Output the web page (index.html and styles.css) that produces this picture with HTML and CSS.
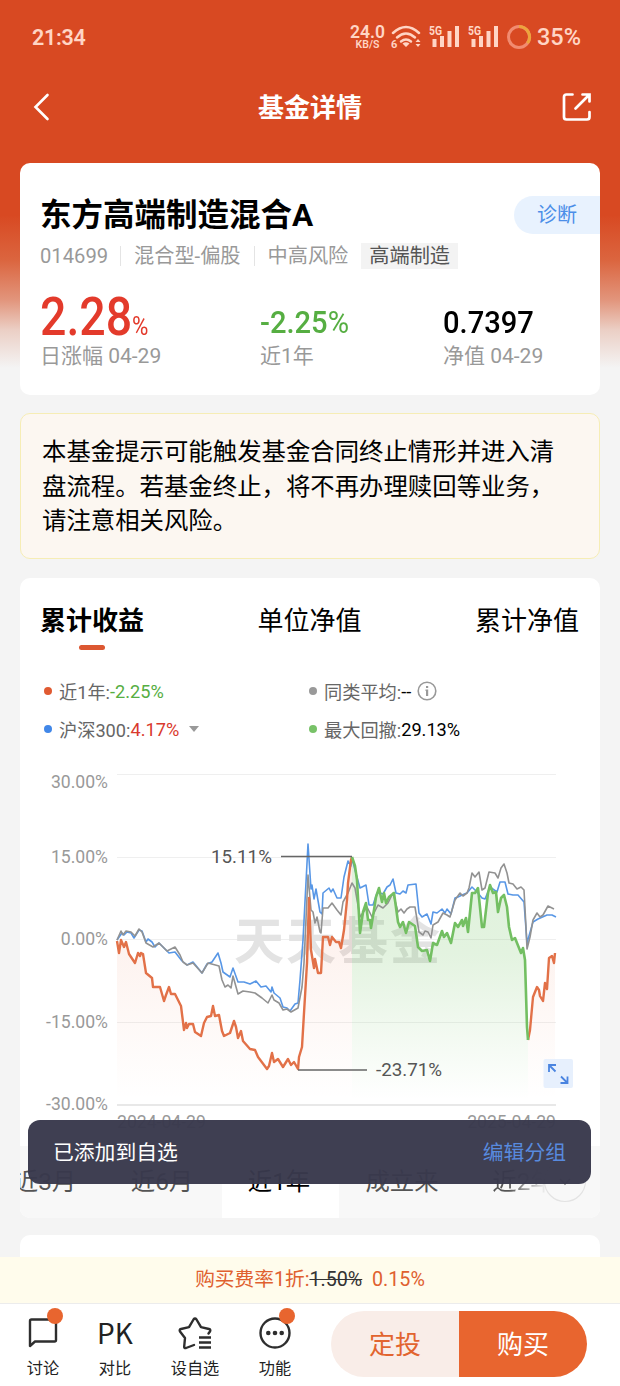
FILE: index.html
```html
<!DOCTYPE html>
<html lang="zh-CN">
<head>
    <meta charset="UTF-8">
    <meta name="viewport" content="width=device-width, initial-scale=1.0">
    <title>基金详情</title>
    <link rel="stylesheet" href="styles.css">
</head>
<body>
<div class="app">
    <div class="page">
        <!-- Status bar -->
        <div class="status-bar">
            <span class="time">21:34</span>
            <div class="status-icons">
                <div class="speed"><b>24.0</b><span>KB/S</span></div>
                <svg class="wifi" width="31" height="24" viewBox="0 0 31 24">
                    <g fill="none" stroke="#ffd5c5" stroke-width="2.5" stroke-linecap="round">
                        <path d="M2 8Q15 -4 28 8"/>
                        <path d="M6 12.500Q15 4.500 24 12.500"/>
                        <path d="M10 16.500Q15 12.500 20 16.500"/>
                    </g>
                    <path d="M11.500 18.500Q15 16 18.500 18.500L15 22ZM24.500 17L27 14L29.500 17ZM24.500 19L27 22L29.500 19Z" fill="#ffd5c5"/>
                    <text x="0" y="23" class="wifi-num">6</text>
                </svg>
                <svg width="31" height="24" viewBox="0 0 31 24">
                    <text x="0" y="9.500" class="net" textLength="13" lengthAdjust="spacingAndGlyphs">5G</text>
                    <path d="M3.500 14h4v8h-4zM11 11h4v11h-4zM18.500 6h4v16h-4zM26 1h4v21h-4z" fill="#ffd5c5"/>
                </svg>
                <svg width="31" height="24" viewBox="0 0 31 24">
                    <text x="0" y="9.500" class="net" textLength="13" lengthAdjust="spacingAndGlyphs">5G</text>
                    <path d="M3.500 14h4v8h-4zM11 11h4v11h-4zM18.500 6h4v16h-4zM26 1h4v21h-4z" fill="#ffd5c5"/>
                </svg>
                <svg class="ring" width="26" height="26" viewBox="0 0 26 26" fill="none" stroke-width="3">
                    <circle cx="13" cy="13" r="10.500" stroke="#f18b70"/>
                    <path d="M13 2.500A10.500 10.500 0 0 1 21.500 19.200" stroke="#eda43d"/>
                </svg>
                <span class="battery">35%</span>
            </div>
        </div>

        <!-- Nav bar -->
        <div class="nav-bar">
            <svg width="20" height="30" viewBox="0 0 20 30"><path d="M15.500 3L3.500 15L15.500 27" fill="none" stroke="#fff" stroke-width="2.600" stroke-linecap="round"/></svg>
            <h1>基金详情</h1>
            <svg width="30" height="30" viewBox="0 0 30 30" fill="none" stroke="#fff" stroke-width="2.700" stroke-linecap="round">
                <path d="M10.500 2.500H4.500Q2 2.500 2 5V25Q2 27.500 4.500 27.500H25Q27.500 27.500 27.500 25V20"/>
                <path d="M13.500 16.500L27 3M20.500 2.500H27.500V9.500"/>
            </svg>
        </div>

        <!-- Fund summary -->
        <div class="card summary">
            <div class="title-row">
                <h2>东方高端制造混合A</h2>
                <span class="diagnose">诊断</span>
            </div>
            <div class="tags">
                <span class="code">014699</span>
                <span class="sep">混合型-偏股</span>
                <span class="sep">中高风险</span>
                <span class="tag">高端制造</span>
            </div>
            <div class="stats">
                <div>
                    <div class="value big"><span>2.28<small>%</small></span></div>
                    <div class="label">日涨幅 04-29</div>
                </div>
                <div>
                    <div class="value green"><span>-2.25<i>%</i></span></div>
                    <div class="label">近1年</div>
                </div>
                <div>
                    <div class="value"><span>0.7397</span></div>
                    <div class="label">净值 04-29</div>
                </div>
            </div>
        </div>

        <div class="notice">本基金提示可能触发基金合同终止情形并进入清盘流程。若基金终止，将不再办理赎回等业务，请注意相关风险。</div>

        <!-- Performance chart -->
        <div class="card performance">
            <div class="tabs">
                <span class="active">累计收益</span>
                <span>单位净值</span>
                <span>累计净值</span>
            </div>
            <div class="legend">
                <div><i class="dot orange"></i>近1年:<em class="down">-2.25%</em></div>
                <div><i class="dot grey"></i>同类平均:<em>--</em>
                    <svg class="info" width="20" height="20" viewBox="0 0 20 20"><circle cx="10" cy="10" r="8.800" fill="none" stroke="#999" stroke-width="1.600"/><path d="M9 5h2.200v2H9zM8.500 8.500h2.700v6.500H9V10H8.500z" fill="#999"/></svg>
                </div>
                <div><i class="dot blue"></i>沪深300:<em class="up">4.17%</em><b class="caret"></b></div>
                <div><i class="dot lime"></i>最大回撤:<em>29.13%</em></div>
            </div>
            <svg class="chart" width="580" height="386" viewBox="20 760 580 386">
                <defs>
                    <linearGradient id="orangeFill" gradientUnits="userSpaceOnUse" x1="0" y1="857" x2="0" y2="1100">
                        <stop offset="0" stop-color="#e8683a" stop-opacity=".13"/>
                        <stop offset="1" stop-color="#e8683a" stop-opacity="0"/>
                    </linearGradient>
                    <linearGradient id="greenFill" gradientUnits="userSpaceOnUse" x1="0" y1="857" x2="0" y2="1100">
                        <stop offset="0" stop-color="#6dc05c" stop-opacity=".22"/>
                        <stop offset=".4" stop-color="#6dc05c" stop-opacity=".19"/>
                        <stop offset="1" stop-color="#6dc05c" stop-opacity="0"/>
                    </linearGradient>
                </defs>
                <path class="grid" d="M117 774.500H556M117 857.500H556M117 939.500H556M117 1022.500H556"/>
                <path class="axis" d="M117 1105H556"/>
                <text class="watermark" x="234" y="959" textLength="206">天天基金</text>
                <g id="fills"></g>
                <g id="lines"></g>
                <path class="marker" d="M281 856.500H352M298 1070H367"/>
                <g class="y-axis">
                    <text x="108" y="787.500">30.00%</text>
                    <text x="108" y="862.500">15.00%</text>
                    <text x="108" y="945">0.00%</text>
                    <text x="108" y="1027.500">-15.00%</text>
                    <text x="108" y="1110">-30.00%</text>
                </g>
                <g class="callout">
                    <text x="211" y="862.500">15.11%</text>
                    <text x="376" y="1076">-23.71%</text>
                </g>
                <g class="x-axis">
                    <text x="117" y="1128">2024-04-29</text>
                    <text x="556" y="1128" text-anchor="end">2025-04-29</text>
                </g>
                <rect x="543.500" y="1059" width="29.500" height="29" rx="2" fill="#e7f0fd"/>
                <path d="M549 1072V1065H556M549.500 1065.500L555.500 1071.500M567.500 1076.500V1083H560.500M567 1082.500L561 1076.500" fill="none" stroke="#4a84e0" stroke-width="1.800"/>
            </svg>
            <div class="ranges">
                <span>近3月</span>
                <span>近6月</span>
                <span class="active">近1年</span>
                <span class="since">成立来</span>
                <span class="fade">近2年</span>
                <svg class="more" width="44" height="44" viewBox="0 0 44 44"><circle cx="22" cy="22" r="20.500" fill="#f8f8f8" stroke="#e3e3e3" stroke-width="1.200"/><path d="M17 20L22 25L27 20" fill="none" stroke="#888" stroke-width="1.600"/></svg>
            </div>
        </div>
        <div class="card next-card"></div>
    </div>

    <div class="fee">购买费率1折:<del>1.50%</del>&nbsp;&nbsp;0.15%</div>

    <!-- Bottom toolbar -->
    <div class="toolbar">
        <div class="tool">
            <svg width="36" height="36" viewBox="0 0 36 36"><path d="M5 31V6Q5 4.500 6.500 4.500H29.500Q31 4.500 31 6V25Q31 26.500 29.500 26.500H10Z" fill="none" stroke="#2e2e2e" stroke-width="2.400" stroke-linejoin="round"/></svg>
            <span>讨论</span><i class="badge"></i>
        </div>
        <div class="tool"><strong>PK</strong><span>对比</span></div>
        <div class="tool">
            <svg width="36" height="36" viewBox="0 0 36 36" fill="none" stroke="#2e2e2e" stroke-width="2.400" stroke-linejoin="round" stroke-linecap="round"><path d="M17 30L9 33Q7 33.500 7.200 31.500L8 23L3 16.500Q2 14.500 4 14L12 12.200L16.500 4.500Q18 2.500 19.500 4.500L24 12.200L32 14Q34 14.500 33 16.500L31.500 18.500"/><path d="M22 22.500H34M22 27.500H34M22 32.500H34" stroke-linecap="butt"/></svg>
            <span>设自选</span>
        </div>
        <div class="tool">
            <svg width="36" height="36" viewBox="0 0 36 36"><circle cx="18" cy="18" r="14.500" fill="none" stroke="#2e2e2e" stroke-width="2.400"/><g fill="#2e2e2e"><circle cx="11.300" cy="18" r="2.300"/><circle cx="18" cy="18" r="2.300"/><circle cx="24.700" cy="18" r="2.300"/></g></svg>
            <span>功能</span><i class="badge"></i>
        </div>
        <div class="buttons">
            <button class="plan">定投</button>
            <button class="buy">购买</button>
        </div>
    </div>

    <div class="toast"><span>已添加到自选</span><a>编辑分组</a></div>
</div>
<script src="chart.js"></script>
</body>
</html>
```
FILE: styles.css
```css
* {
    box-sizing: border-box;
}

body {
    margin: 0;
    background-color: #f4f4f4;
    font-family: Roboto, "Noto Sans CJK SC", sans-serif;
    font-weight: 400;
    color: #000;
}

i, em {
    font-style: normal;
}

h1, h2 {
    margin: 0;
}

.app {
    position: relative;
    display: flex;
    flex-direction: column;
    width: 620px;
    height: 1386px;
    overflow: hidden;
}

.page {
    flex: 1;
    min-height: 0;
    overflow: hidden;
    padding: 0 20px;
    background: linear-gradient(#d84922 0, #d84922 215px, #db653f 260px, #e2957c 300px, #ebcfc5 330px, #f4f4f4 368px);
}

/* Status bar */
.status-bar {
    display: flex;
    justify-content: space-between;
    align-items: center;
    height: 74px;
    padding: 0 19px 0 12px;
    color: #ffd5c5;
}

.time {
    font-size: 21.5px;
    font-weight: 600;
    letter-spacing: -0.3px;
}

.status-icons {
    display: flex;
    align-items: center;
    gap: 7.5px;
}

.speed {
    display: flex;
    flex-direction: column;
    align-items: center;
    font-size: 10.5px;
    line-height: 11px;
    font-weight: 600;
    width: 36px;
    margin-right: -2px;
}

.speed b {
    font-size: 17.5px;
    line-height: 14px;
    font-weight: 600;
}

.wifi-num {
    font-size: 11px;
    font-weight: 700;
    fill: #ffd5c5;
}

.net {
    font-size: 12px;
    font-weight: 700;
    fill: #ffd5c5;
}

.battery {
    font-size: 23.5px;
    font-weight: 500;
    margin-left: -3px;
}

/* Nav bar */
.nav-bar {
    display: flex;
    justify-content: space-between;
    align-items: center;
    height: 66px;
    padding: 0 8px 0 12px;
    color: #fff;
    margin-bottom: 23px;
}

.nav-bar h1 {
    padding: 2px 0 0 6px;
    font-size: 26px;
    line-height: 30px;
    font-weight: 700;
}

.card {
    background-color: #fff;
    border-radius: 10px;
}

/* Fund summary */
.summary {
    height: 232px;
    padding: 33px 0 0 20px;
}

.title-row {
    display: flex;
    justify-content: space-between;
    align-items: center;
    height: 38px;
}

.title-row h2 {
    padding-top: 2px;
    font-size: 31.500px;
    line-height: 38px;
    font-weight: 700;
}

.diagnose {
    width: 86px;
    height: 38px;
    border-radius: 19px 0 0 19px;
    background-color: #e8f2fe;
    color: #4b8ee8;
    font-size: 20px;
    line-height: 39px;
    text-align: center;
}

.tags {
    display: flex;
    align-items: center;
    height: 28px;
    margin-top: 8px;
    color: #999;
    font-size: 20.2px;
    line-height: 26px;
}

.code {
    width: 80px;
}

.sep {
    border-left: 1px solid #e4e4e4;
    line-height: 20px;
    padding: 0 13px;
}

.tag {
    background-color: #f3f3f3;
    color: #555;
    padding: 0 8px;
}

.stats {
    display: grid;
    grid-template-columns: 220px 183px auto;
    margin-top: 16px;
}

.value {
    height: 56px;
    display: flex;
    align-items: flex-end;
    font-size: 32px;
    font-weight: 500;
    line-height: 40px;
    white-space: nowrap;
}

.value span {
    transform: scaleX(0.91);
    transform-origin: left;
}

.value i {
    font-weight: 400;
}

.big {
    color: #e33a2b;
}

.big span {
    margin-bottom: -12px;
    font-size: 54px;
    line-height: 56px;
    transform: scaleX(0.86);
}

.big small {
    font-size: 26px;
    font-weight: 400;
}

.green {
    color: #56ae42;
}

.label {
    color: #999;
    font-size: 21px;
    line-height: 28px;
}

.notice {
    height: 146px;
    margin: 18px 0 19px;
    padding: 21px 28px 0 21px;
    border: 1px solid #f6edb5;
    border-radius: 10px;
    background-color: #fcf7f1;
    font-size: 24.4px;
    line-height: 34.7px;
}

/* Performance chart */
.performance {
    height: 640px;
    overflow: hidden;
}

.tabs {
    display: flex;
    justify-content: space-between;
    height: 82px;
    padding: 25px 21px 0 20px;
    font-size: 26px;
    line-height: 36px;
}

.tabs span {
    display: flex;
    flex-direction: column;
    align-items: center;
}

.tabs .active {
    font-weight: 700;
}

.tabs .active::after {
    content: "";
    width: 26px;
    height: 5px;
    margin-top: 6px;
    border-radius: 3px;
    background-color: #dc5731;
}

.legend {
    display: grid;
    grid-template-columns: 265px auto;
    grid-auto-rows: 38px;
    margin-top: 12px;
    padding-left: 24px;
    color: #666;
    font-size: 18.2px;
}

.legend div {
    display: flex;
    align-items: center;
}

.legend em {
    color: #000;
}

.legend .down {
    color: #56ae42;
}

.legend .up {
    color: #d93a2e;
}

.dot {
    width: 8px;
    height: 8px;
    border-radius: 50%;
    margin-right: 7px;
}

.dot.orange { background-color: #e05a31; }
.dot.grey { background-color: #999; }
.dot.blue { background-color: #4187e8; }
.dot.lime { background-color: #78c268; }

.info {
    margin-left: 6px;
}

.caret {
    margin-left: 10px;
    border: 5px solid transparent;
    border-top: 6px solid #999;
    border-bottom: 0;
}

.chart {
    display: block;
    margin-top: 12px;
}

.grid {
    stroke: #efefef;
    stroke-width: 1;
}

.axis {
    stroke: #e8e8e8;
    stroke-width: 2;
}

.watermark {
    font-family: "Noto Sans CJK SC", sans-serif;
    font-size: 50px;
    font-weight: 700;
    fill: #e3e3e3;
}

.marker {
    stroke: #666;
    stroke-width: 1.6;
}

.y-axis {
    font-size: 17.6px;
    text-anchor: end;
    fill: #999;
}

.callout {
    font-size: 18.8px;
    fill: #555;
}

.x-axis {
    font-size: 17.6px;
    fill: #999;
}

#lines path {
    fill: none;
    stroke-linejoin: round;
}

.ranges {
    position: relative;
    display: flex;
    height: 72px;
    margin-left: -32px;
    background-color: #f8f8f8;
    color: #555;
    font-size: 24.4px;
    line-height: 72px;
    white-space: nowrap;
}

.ranges span {
    flex: 0 0 117px;
    padding-right: 3px;
    text-align: center;
}

.ranges .active {
    background-color: #fff;
    color: #000;
}

.ranges .since {
    padding: 0 0 0 9px;
}

.ranges .fade {
    padding: 0 0 0 18px;
    background: linear-gradient(90deg, #555 45%, #f8f8f8 78%);
    -webkit-background-clip: text;
    background-clip: text;
    color: transparent;
}

.more {
    position: absolute;
    right: 13px;
    top: 13px;
}

.next-card {
    height: 60px;
    margin-top: 17px;
}

/* Fee and toolbar */
.fee {
    flex: 0 0 46px;
    height: 46px;
    background-color: #fffcec;
    color: #e0602f;
    font-size: 19.7px;
    line-height: 46px;
    text-align: center;
}

.fee del {
    color: #333;
}

.toolbar {
    flex: 0 0 83px;
    display: flex;
    padding-left: 7px;
    background-color: #fff;
    border-top: 1px solid #ececec;
}

.tool {
    position: relative;
    display: flex;
    flex-direction: column;
    align-items: center;
    width: 72px;
    padding-top: 11px;
    color: #222;
    font-size: 16.2px;
    line-height: 24px;
}

.tool:nth-child(3) {
    width: 88px;
}

.tool svg,
.tool strong {
    height: 36px;
    margin-bottom: 6px;
}

.tool strong {
    font-family: "Noto Sans CJK SC", sans-serif;
    font-size: 28px;
    line-height: 34px;
    font-weight: 400;
}

.badge {
    position: absolute;
    left: 40px;
    top: 4px;
    width: 16px;
    height: 16px;
    border-radius: 50%;
    background-color: #e8652f;
}

.buttons {
    display: flex;
    width: 256px;
    height: 66px;
    margin: 7px 0 0 20px;
    border-radius: 33px;
    overflow: hidden;
}

.buttons button {
    flex: 1;
    padding: 0 0 4px;
    border: none;
    font: inherit;
    font-size: 26px;
}

.plan {
    background-color: #f9ede8;
    color: #e2642f;
}

.buy {
    background-color: #e8652f;
    color: #fff;
}

/* Toast lies over the chart and the range tabs */
.toast {
    position: absolute;
    left: 28px;
    top: 1120px;
    display: flex;
    justify-content: space-between;
    align-items: center;
    width: 563px;
    height: 64px;
    padding: 0 25px 2px;
    border-radius: 12px;
    background-color: rgba(57, 57, 76, 0.97);
    color: #fff;
    font-size: 20.8px;
}

.toast a {
    color: #588ade;
}
```
FILE: chart.js
```js
// Points are x,y pairs in chart coordinates
const series = {
    grey: "117,940 121,931 123,935 126,931 131,932 135,936 139,929 142,932 146,943 153,947 159,943 167,951 175,947 180,955 183,962 187,965 193,963 202,973 208,963 219,966 222,980 225,987 228,985 231,988 233,976 238,994 243,991 250,992 255,993 262,998 268,1003 272,995 274,1000 279,1003 283,1010 287,1009 291,1012 298,1008 302,987 304,963 308,875 311,910 313,912 315,923 317,917 320,932 321,933 323,908 328,908 332,903 337,910 341,915 343,902 348,893 352,883 355,888 360,917 367,907 372,917 378,905 383,908 388,903 393,893 398,912 401,909 404,913 407,909 410,907 415,907 419,932 423,935 425,931 428,932 431,938 433,925 438,922 443,913 447,915 450,917 455,900 460,893 463,896 467,893 469,888 472,873 475,877 479,872 482,890 485,888 489,872 495,873 498,878 501,868 504,864 507,873 509,883 513,884 517,889 521,887 524,890 526,927 527,949 530,937 533,920 537,913 540,917 543,915 548,906 554,909",
    blue: "117,940 122,933 124,935 127,932 131,933 134,938 139,930 142,931 146,942 148,939 152,942 155,947 159,943 163,947 169,953 175,952 182,961 187,965 193,962 202,973 207,964 212,962 218,953 221,963 223,972 230,977 233,968 238,982 244,982 250,984 256,981 261,987 266,986 271,992 272,987 274,993 280,998 283,1007 287,1008 290,1011 295,1004 298,1003 300,980 303,940 308,844 311,889 312,885 314,899 316,889 320,912 322,914 323,893 329,888 331,892 333,889 337,898 341,898 344,877 348,861 351,866 352,858 355,870 360,888 366,885 369,905 373,905 377,893 380,893 383,894 387,887 390,885 393,879 396,893 400,894 403,891 406,893 408,885 416,884 419,913 422,917 427,914 431,924 433,912 437,913 442,909 445,913 447,909 451,914 455,898 458,897 462,895 467,893 472,887 477,892 482,898 485,899 490,887 497,892 500,882 505,882 508,894 513,895 518,895 524,902 527,943 533,922 538,919 547,915 552,915 556,917",
    orange: "117,941 119,953 121,940 124,947 126,942 129,954 135,963 138,953 140,956 141,953 143,954 146,973 152,978 153,987 160,987 164,1001 166,995 169,987 171,994 175,994 181,1006 184,1030 186,1023 187,1028 189,1024 193,1024 195,1032 201,1036 204,1023 207,1017 211,1016 213,1006 215,1016 219,1015 222,1031 224,1036 230,1033 234,1021 236,1027 238,1038 241,1031 243,1041 250,1049 255,1050 258,1057 267,1069 269,1066 272,1053 274,1062 278,1059 283,1067 288,1059 291,1065 294,1062 298,1069 299,1057 302,1047 304,1013 307,963 309,898 311,950 314,968 315,959 318,973 321,973 323,937 328,937 330,945 332,937 336,942 339,942 341,948 344,930 347,900 348,883 351,860 352,857",
    green: "352,857 355,866 357,880 360,933 363,912 366,903 368,920 370,920 371,928 374,910 376,897 379,888 382,902 384,893 386,903 389,897 394,893 398,922 400,927 403,922 406,933 409,922 415,926 418,947 422,951 427,950 430,961 433,943 437,945 442,931 444,937 447,933 451,943 455,923 458,927 462,920 463,926 466,918 468,932 472,893 475,893 478,888 482,927 484,927 488,893 490,885 493,893 496,892 498,912 501,898 504,895 507,907 509,927 512,940 515,938 521,953 523,948 525,960 527,1027 528,1040",
    orangeEnd: "528,1040 530,1030 533,997 537,987 539,990 540,996 543,1001 545,983 547,989 549,958 552,956 554,963 555,953"
};

function addPath(groupId, d, attrs) {
    const path = document.createElementNS("http://www.w3.org/2000/svg", "path");
    path.setAttribute("d", d);
    for (const name in attrs) {
        path.setAttribute(name, attrs[name]);
    }
    document.getElementById(groupId).appendChild(path);
}

function addArea(points, fill) {
    const list = points.split(" ");
    const first = list[0].split(",")[0];
    const last = list[list.length - 1].split(",")[0];
    addPath("fills", "M" + points + " L" + last + ",1104 L" + first + ",1104Z", { fill: fill });
}

function addLine(points, color, width) {
    addPath("lines", "M" + points, { stroke: color, "stroke-width": width });
}

addArea(series.orange, "url(#orangeFill)");
addArea(series.green, "url(#greenFill)");
addArea(series.orangeEnd, "url(#orangeFill)");

addLine(series.blue, "#5897e6", 1.6);
addLine(series.grey, "#929292", 1.6);
addLine(series.orange, "#e27148", 2.4);
addLine(series.orangeEnd, "#e27148", 2.4);
addLine(series.green, "#73bf62", 2.6);
```
